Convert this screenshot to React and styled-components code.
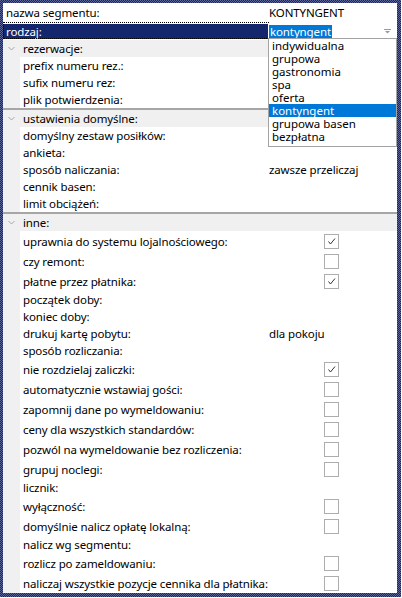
import React from 'react';
import styled, { createGlobalStyle } from 'styled-components';

const GlobalStyle = createGlobalStyle`
  html, body {
    margin: 0;
    padding: 0;
    background: #fff;
  }
  body {
    font-family: "Noto Sans", "Open Sans", sans-serif;
    font-size: 11.5px;
    letter-spacing: -0.12px;
    color: #000;
  }
`;

const Frame = styled.div`
  width: 401px;
  height: 597px;
  box-sizing: border-box;
  padding: 3px 4px 4px 3px;
  background: repeating-conic-gradient(#14256b 0 25%, #5b6597 0 50%) 0 0 / 2px 2px;
`;

const Panel = styled.div`
  position: relative;
  height: 100%;
  background: #fff;
  display: flex;
  flex-direction: column;
  overflow: hidden;
`;

const TopRow = styled.div`
  display: grid;
  grid-template-columns: 265px 1fr;
  height: ${p => p.$h || 19}px;
  align-items: stretch;
  position: relative;
  outline: ${p => (p.$focus ? '1px dotted #000' : 'none')};
  outline-offset: -1px;
`;

const TopLabel = styled.div`
  display: flex;
  align-items: center;
  padding-left: 3px;
  background: ${p => (p.$selected ? '#14276c' : 'transparent')};
  color: ${p => (p.$selected ? '#fff' : '#000')};
  margin: ${p => (p.$selected ? '2px 0 1px' : '0')};
`;

const Value = styled.div`
  display: flex;
  align-items: center;
  padding-left: 1px;
  position: relative;
`;

const SectionHeader = styled.div`
  display: flex;
  align-items: center;
  height: ${p => p.$h || 18}px;
  background: #f0f0f0;
  border-top: ${p => (p.$sep ? '2px solid #a6a6a6' : 'none')};
  margin-top: ${p => p.$gap || 0}px;
`;

const Chevron = styled.svg`
  width: 20px;
  height: 8px;
  flex: none;
`;

const SectionBody = styled.div`
  border-left: 17px solid #f0f0f0;
`;

const Row = styled.div`
  display: grid;
  grid-template-columns: 248px 1fr;
  height: ${p => (p.$box ? 20 : 17)}px;
  align-items: center;
`;

const Label = styled.div`
  padding-left: 3px;
  white-space: nowrap;
`;

const BoxCell = styled.div`
  padding-left: 56px;
  display: flex;
  align-items: center;
`;

const Box = styled.div`
  width: 13px;
  height: 13px;
  border: 1px solid #adadad;
  background: #fff;
  display: flex;
  align-items: center;
  justify-content: center;
`;

const Combo = styled.div`
  flex: 1;
  display: flex;
  align-items: center;
  justify-content: space-between;
  height: 100%;
  margin: 2px 0 1px;
  background: #fff;
`;

const ComboText = styled.span`
  background: #0078d7;
  color: #fff;
  padding: 0 1px;
  line-height: 13px;
`;

const Arrow = styled.svg`
  width: 7px;
  height: 5px;
  margin-right: 6px;
`;

const List = styled.div`
  position: absolute;
  top: 16px;
  left: 0;
  width: 127px;
  border: 1px solid #a3a3a3;
  background: #fff;
  z-index: 2;
  padding-bottom: 3px;
`;

const Item = styled.div`
  height: 13px;
  line-height: 13px;
  padding-left: 3px;
  letter-spacing: 0;
  background: ${p => (p.$active ? '#0078d7' : '#fff')};
  color: ${p => (p.$active ? '#fff' : '#000')};
`;

const options = ['indywidualna', 'grupowa', 'gastronomia', 'spa', 'oferta', 'kontyngent', 'grupowa basen', 'bezpłatna'];

const sections = [
  {
    title: 'rezerwacje:',
    rows: [{ label: 'prefix numeru rez.:' }, { label: 'sufix numeru rez:' }, { label: 'plik potwierdzenia:' }],
  },
  {
    title: 'ustawienia domyślne:',
    sep: true,
    rows: [
      { label: 'domyślny zestaw posiłków:' },
      { label: 'ankieta:' },
      { label: 'sposób naliczania:', value: 'zawsze przeliczaj' },
      { label: 'cennik basen:' },
      { label: 'limit obciążeń:' },
    ],
  },
  {
    title: 'inne:',
    sep: true,
    rows: [
      { label: 'uprawnia do systemu lojalnościowego:', box: true, checked: true },
      { label: 'czy remont:', box: true },
      { label: 'płatne przez płatnika:', box: true, checked: true },
      { label: 'początek doby:' },
      { label: 'koniec doby:' },
      { label: 'drukuj kartę pobytu:', value: 'dla pokoju' },
      { label: 'sposób rozliczania:' },
      { label: 'nie rozdzielaj zaliczki:', box: true, checked: true },
      { label: 'automatycznie wstawiaj gości:', box: true },
      { label: 'zapomnij dane po wymeldowaniu:', box: true },
      { label: 'ceny dla wszystkich standardów:', box: true },
      { label: 'pozwól na wymeldowanie bez rozliczenia:', box: true },
      { label: 'grupuj noclegi:', box: true },
      { label: 'licznik:' },
      { label: 'wyłączność:', box: true },
      { label: 'domyślnie nalicz opłatę lokalną:', box: true },
      { label: 'nalicz wg segmentu:' },
      { label: 'rozlicz po zameldowaniu:', box: true },
      { label: 'naliczaj wszystkie pozycje cennika dla płatnika:', box: true },
    ],
  },
];

function Check() {
  return (
    <svg width="11" height="11" viewBox="0 0 11 11">
      <path d="M2.5 5.5 L4.5 8 L9 2.5" fill="none" stroke="#333" strokeWidth="1" />
    </svg>
  );
}

export default function App() {
  return (
    <>
      <GlobalStyle />
      <Frame>
        <Panel>
          <TopRow $h={19}>
            <TopLabel>nazwa segmentu:</TopLabel>
            <Value>KONTYNGENT</Value>
          </TopRow>
          <TopRow $h={17} $focus>
            <TopLabel $selected>rodzaj:</TopLabel>
            <Value>
              <Combo>
                <ComboText>kontyngent</ComboText>
                <Arrow viewBox="0 0 7 5">
                  <path d="M0 0.5 H7" stroke="#9a9a9a" strokeWidth="1" />
                  <path d="M1 2 H6 L3.5 4.5 Z" fill="#9a9a9a" />
                </Arrow>
              </Combo>
              <List>
                {options.map(o => (
                  <Item key={o} $active={o === 'kontyngent'}>{o}</Item>
                ))}
              </List>
            </Value>
          </TopRow>
          {sections.map((s, i) => (
            <React.Fragment key={s.title}>
              <SectionHeader $sep={s.sep} $gap={i === 0 ? 1 : 0} $h={s.sep ? 17 : 18}>
                <Chevron viewBox="0 0 20 8">
                  <path d="M5.5 2 L8.5 5 L11.5 2" fill="none" stroke="#a8a8a8" strokeWidth="1" />
                </Chevron>
                {s.title}
              </SectionHeader>
              <SectionBody>
                {s.rows.map(r => (
                  <Row key={r.label} $box={r.box}>
                    <Label>{r.label}</Label>
                    {r.box ? (
                      <BoxCell>
                        <Box>{r.checked && <Check />}</Box>
                      </BoxCell>
                    ) : (
                      <Value>{r.value}</Value>
                    )}
                  </Row>
                ))}
              </SectionBody>
            </React.Fragment>
          ))}
        </Panel>
      </Frame>
    </>
  );
}
